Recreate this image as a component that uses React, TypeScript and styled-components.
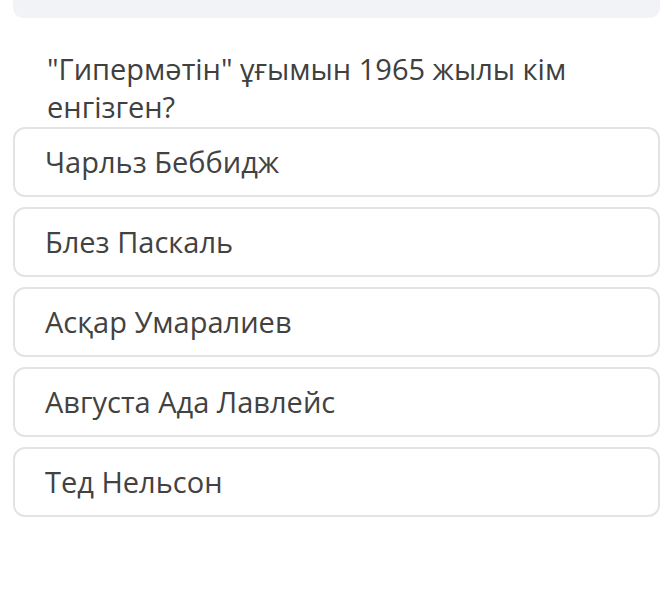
import styled, { createGlobalStyle } from 'styled-components'

const GlobalStyle = createGlobalStyle`
    html, body {
        margin: 0;
        padding: 0;
        background: #ffffff;
    }
    body {
        font-family: "Open Sans", "Noto Sans", sans-serif;
    }
`

const Page = styled.div`
    width: 663px;
    height: 596px;
    padding: 0 3px 0 13px;
    box-sizing: border-box;
    overflow: hidden;
`

const TopBar = styled.div`
    height: 18px;
    background: #f2f3f6;
    border-radius: 0 0 10px 10px;
`

const Question = styled.div`
    margin-top: 32px;
    padding: 0 60px 0 34px;
    font-size: 29px;
    line-height: 38px;
    color: #404040;
`

const Options = styled.div`
    display: flex;
    flex-direction: column;
    gap: 10px;
    margin-top: 1px;
`

const Option = styled.div`
    height: 70px;
    box-sizing: border-box;
    display: flex;
    align-items: center;
    padding: 0 30px 2px;
    border: 2px solid #e3e3e3;
    border-radius: 12px;
    font-size: 29px;
    color: #424242;
`

const answers = [
    'Чарльз Беббидж',
    'Блез Паскаль',
    'Асқар Умаралиев',
    'Августа Ада Лавлейс',
    'Тед Нельсон',
]

const App = () => {
    return (
        <>
            <GlobalStyle />
            <Page>
                <TopBar />
                <Question>"Гипермәтін" ұғымын 1965 жылы кім енгізген?</Question>
                <Options>
                    {answers.map((a) => (
                        <Option key={a}>{a}</Option>
                    ))}
                </Options>
            </Page>
        </>
    )
}

export default App
